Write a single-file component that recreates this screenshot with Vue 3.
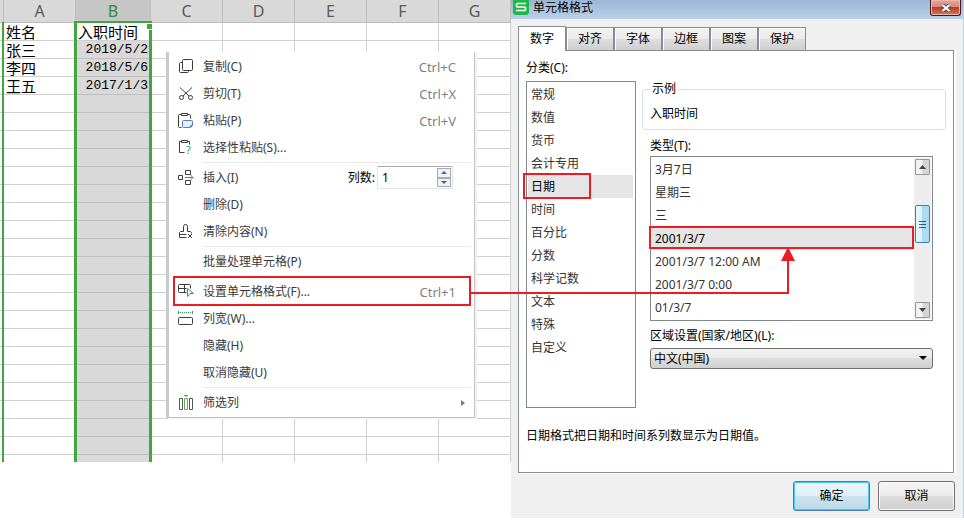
<script setup>
    import { ref, onMounted, onBeforeUnmount } from 'vue'

    const columns = ['A', 'B', 'C', 'D', 'E', 'F', 'G']
    const rows = [
        ['姓名', '入职时间'],
        ['张三', '2019/5/2'],
        ['李四', '2018/5/6'],
        ['王五', '2017/1/3']
    ]
    const rowCount = 25

    const menu = [
        { icon: 'copy', text: '复制(C)', key: 'Ctrl+C' },
        { icon: 'cut', text: '剪切(T)', key: 'Ctrl+X' },
        { icon: 'paste', text: '粘贴(P)', key: 'Ctrl+V' },
        { icon: 'special', text: '选择性粘贴(S)...' },
        { sep: true },
        { icon: 'insert', text: '插入(I)', count: true },
        { text: '删除(D)' },
        { icon: 'clear', text: '清除内容(N)' },
        { sep: true },
        { text: '批量处理单元格(P)' },
        { sep: true },
        { icon: 'format', text: '设置单元格格式(F)...', key: 'Ctrl+1', marked: true },
        { icon: 'width', text: '列宽(W)...' },
        { text: '隐藏(H)' },
        { text: '取消隐藏(U)' },
        { sep: true },
        { icon: 'filter', text: '筛选列', sub: true }
    ]

    const dark = '#3c3c3c'
    const green = '#2f9e5b'
    const blue = '#4a7fd6'

    const icons = {
        copy: [
            { d: 'M5.5 1.5h8a1 1 0 0 1 1 1v9a1 1 0 0 1-1 1h-8a1 1 0 0 1-1-1v-9a1 1 0 0 1 1-1z', c: dark },
            { d: 'M4.5 4.5h-2a1 1 0 0 0-1 1v8a1 1 0 0 0 1 1h7a1 1 0 0 0 1-1v-1', c: dark }
        ],
        cut: [
            { d: 'M2 2.5l9 8.5M14 2.5L5 11', c: dark },
            { d: 'M5.5 12.5a2 2 0 1 1-4 0a2 2 0 1 1 4 0zM14.5 12.5a2 2 0 1 1-4 0a2 2 0 1 1 4 0z', c: dark }
        ],
        paste: [
            { d: 'M3.5 2.5h-2a1 1 0 0 0-1 1v11a1 1 0 0 0 1 1h2M9.5 2.5h2a1 1 0 0 1 1 1v3', c: dark },
            { d: 'M3.5 1.5h6v2h-6z', c: dark },
            { d: 'M5.5 8.5h8a1 1 0 0 1 1 1v4l-2 2h-7a1 1 0 0 1-1-1v-5a1 1 0 0 1 1-1z', c: blue, f: '#e6effc' },
            { d: 'M14.5 13.5h-2v2', c: blue }
        ],
        special: [
            { d: 'M3.5 2.5h-2v11h5M9.5 2.5h2v3', c: dark },
            { d: 'M3.5 1.5h6v2h-6z', c: dark }
        ],
        insert: [
            { d: 'M.5 6.5h4v4h-4zM7.5 1.5h5v4h-5zM7.5 11.5h5v4h-5z', c: dark },
            { d: 'M7 8.5h8M12.5 6l2.5 2.5l-2.5 2.5', c: green }
        ],
        clear: [
            { d: 'M8.5 14.5h-7v-5l1-1h3v-5a2 2 0 0 1 4 0v5h3l1 1v1M1.5 11.5h7', c: dark },
            { d: 'M10 11l4 4M14 11l-4 4', c: dark }
        ],
        format: [
            { d: 'M8.5 9.5h-7a1 1 0 0 1-1-1v-6a1 1 0 0 1 1-1h10a1 1 0 0 1 1 1v3M.5 5.5h8M6.5 1.5v8', c: dark },
            { d: 'M9.5 5.5l6 5h-3.500l-2.500 3z', c: green, f: '#ffffff' }
        ],
        width: [
            { d: 'M1.5 7.5h12a1 1 0 0 1 1 1v5a1 1 0 0 1-1 1h-12a1 1 0 0 1-1-1v-5a1 1 0 0 1 1-1z', c: dark },
            { d: 'M.5 1v3M14.5 1v3M2 2.5h1M4 2.5h1M6 2.5h1M8 2.5h1M10 2.5h1M12 2.5h1', c: green }
        ],
        filter: [
            { d: 'M1.5 4.5h3v11h-3zM11.5 4.5h3v11h-3z', c: '#50555e' },
            { d: 'M6.5 4.5h3v11h-3zM6 1.5h4M7.5 2.5h1', c: '#5fae3c' }
        ]
    }

    const tabs = ['数字', '对齐', '字体', '边框', '图案', '保护']
    const categories = ['常规', '数值', '货币', '会计专用', '日期', '时间', '百分比', '分数', '科学记数', '文本', '特殊', '自定义']
    const types = ['3月7日', '星期三', '三', '2001/3/7', '2001/3/7 12:00 AM', '2001/3/7 0:00', '01/3/7']

    const tab = ref('数字')
    const category = ref('日期')
    const type = ref('2001/3/7')
    const count = ref(1)

    // connector between the marked menu entry and the chosen type
    const page = ref(null)
    const line = ref('')
    const head = ref('')

    function drawArrow() {
        const root = page.value
        const from = root.querySelector('.marked')
        const to = root.querySelector('.types .selected')
        if (!from || !to) {
            return
        }
        const base = root.getBoundingClientRect()
        const a = from.getBoundingClientRect()
        const b = to.getBoundingClientRect()
        const x1 = Math.round(a.right - base.left) - 4
        const y1 = Math.round(a.top - base.top) + 15
        const x2 = Math.round(b.left - base.left + b.width * 0.52)
        const y2 = Math.round(b.bottom - base.top) - 2
        line.value = `M${x1} ${y1}H${x2}V${y2 + 12}`
        head.value = `M${x2} ${y2 - 1}l7 14h-14z`
    }

    onMounted(() => {
        drawArrow()
        window.addEventListener('resize', drawArrow)
    })
    onBeforeUnmount(() => window.removeEventListener('resize', drawArrow))
</script>

<template>
	<main class="page" ref="page">
		<section class="sheet">
			<table class="grid">
				<colgroup>
					<col class="col-edge"><col class="col-a"><col class="col-b">
					<col v-for="n in 5" :key="n">
				</colgroup>
				<thead>
					<tr>
						<th></th>
						<th v-for="c in columns" :key="c" :class="{ current: c === 'B' }">{{ c }}</th>
					</tr>
				</thead>
				<tbody>
					<tr v-for="r in rowCount" :key="r">
						<td></td>
						<td v-for="(c, i) in columns" :key="c" :class="{ filled: i === 1 && r > 1, date: i === 1 && r > 1 }">{{ rows[r - 1] ? rows[r - 1][i] : '' }}</td>
					</tr>
				</tbody>
			</table>
			<div class="edge"></div>
			<div class="selection"><span class="handle"></span></div>

			<ul class="menu">
				<li v-for="(item, i) in menu" :key="i" :class="{ sep: item.sep, item: !item.sep, marked: item.marked }">
					<template v-if="!item.sep">
						<button type="button" class="entry">
							<svg class="icon" width="18" height="18" viewBox="0 0 18 18">
								<path v-for="(p, k) in icons[item.icon] || []" :key="k" :d="p.d" :stroke="p.c" :fill="p.f || 'none'" />
								<text v-if="item.icon === 'special'" x="8" y="15" class="mark">?</text>
							</svg>
							<span>{{ item.text }}</span>
							<span v-if="item.key" class="key">{{ item.key }}</span>
							<svg v-if="item.sub" class="more" width="4" height="6" viewBox="0 0 4 6"><path d="M0 0l4 3l-4 3z" fill="#777" /></svg>
						</button>
						<div v-if="item.count" class="count">
							<label for="count">列数:</label>
							<div class="spin">
								<input id="count" type="text" v-model="count">
								<div class="spin-buttons">
									<button type="button" aria-label="增加" @click="count++"><svg width="6" height="3" viewBox="0 0 6 3"><path d="M0 3l3-3l3 3z" fill="#4561a8" /></svg></button>
									<button type="button" aria-label="减少" @click="count--"><svg width="6" height="3" viewBox="0 0 6 3"><path d="M0 0l3 3l3-3z" fill="#4561a8" /></svg></button>
								</div>
							</div>
						</div>
					</template>
				</li>
			</ul>
		</section>

		<section class="dialog">
			<header class="title">
				<svg class="logo" width="16" height="15" viewBox="0 0 16 15">
					<path d="M0 0h16v12a3 3 0 0 1-3 3h-10a3 3 0 0 1-3-3z" fill="#1fb84a" />
					<path d="M13 3.500H4.500a1 1 0 0 0-1 1v1.500a1 1 0 0 0 1 1h7a1 1 0 0 1 1 1v1.500a1 1 0 0 1-1 1H3" fill="none" stroke="#fff" stroke-width="1.600" />
				</svg>
				<h1>单元格格式</h1>
				<button type="button" class="close" aria-label="关闭">
					<svg width="12" height="10" viewBox="0 0 12 10">
						<path d="M2.500 2l7 6M9.500 2l-7 6" stroke="#4a4a58" stroke-width="4" />
						<path d="M2.500 2l7 6M9.500 2l-7 6" stroke="#fff" stroke-width="2.200" />
					</svg>
				</button>
			</header>

			<nav class="tabs">
				<button v-for="t in tabs" :key="t" type="button" :class="{ active: t === tab }" @click="tab = t">{{ t }}</button>
			</nav>

			<div class="panel">
				<div class="columns">
					<div class="left">
						<span id="cat-label" class="label">分类(C):</span>
						<ul class="list categories" role="listbox" aria-labelledby="cat-label">
							<li v-for="c in categories" :key="c" role="option" :class="{ selected: c === category }" @click="category = c">{{ c }}</li>
						</ul>
					</div>
					<div class="right">
						<fieldset class="sample">
							<legend>示例</legend>
							<p>入职时间</p>
						</fieldset>
						<div class="fields">
							<span id="type-label" class="label">类型(T):</span>
							<div class="list type-box">
								<ul class="types" role="listbox" aria-labelledby="type-label">
									<li v-for="t in types" :key="t" role="option" :class="{ selected: t === type }" @click="type = t">{{ t }}</li>
								</ul>
								<div class="scroll">
									<button type="button" class="step" aria-label="向上"><svg width="7" height="4" viewBox="0 0 7 4"><path d="M0 4l3.500-4l3.500 4z" fill="#444" /></svg></button>
									<span class="thumb"><i></i><i></i><i></i></span>
									<button type="button" class="step" aria-label="向下"><svg width="7" height="4" viewBox="0 0 7 4"><path d="M0 0l3.500 4l3.500-4z" fill="#444" /></svg></button>
								</div>
							</div>
							<label for="region" class="label region-label">区域设置(国家/地区)(L):</label>
							<div class="drop">
								<select id="region"><option>中文(中国)</option></select>
								<svg width="8" height="4" viewBox="0 0 8 4"><path d="M0 0h8l-4 4z" fill="#000" /></svg>
							</div>
						</div>
					</div>
				</div>
				<p class="hint">日期格式把日期和时间系列数显示为日期值。</p>
			</div>

			<footer class="actions">
				<button type="button" class="primary">确定</button>
				<button type="button">取消</button>
			</footer>
		</section>

		<svg class="arrow">
			<path :d="line" fill="none" stroke="#ed1c24" stroke-width="2" />
			<path :d="head" fill="#ed1c24" />
		</svg>
	</main>
</template>

<style>
body {
	background: #fff;
}
</style>

<style scoped>
* {
	box-sizing: border-box;
}

.page {
	position: relative;
	display: grid;
	grid-template-columns: 511fr 453fr;
	align-items: start;
	font-family: "Noto Sans", "Noto Sans CJK SC", sans-serif;
	font-size: 12px;
	line-height: 16px;
	color: #000;
}

button,
input,
select {
	font: inherit;
	color: inherit;
	margin: 0;
	padding: 0;
}

ul,
p,
h1 {
	margin: 0;
	padding: 0;
	list-style: none;
}

/* sheet */
.sheet {
	position: relative;
	overflow: hidden;
}

.grid {
	width: 100%;
	table-layout: fixed;
	border-collapse: separate;
	border-spacing: 0;
	margin-bottom: -11px;
}

.col-edge {
	width: 4px;
}

.col-a {
	width: 72px;
}

.col-b {
	width: 75px;
}

.grid th {
	height: 23px;
	padding: 0;
	background: #d9d9d9;
	border-right: 1px solid #bdbdbd;
	border-bottom: 1px solid #bdbdbd;
	font-size: 16px;
	font-weight: 400;
	line-height: 22px;
	color: #595959;
}

.grid th.current {
	background: #c6c6c6;
	color: #2e8b35;
}

.grid td {
	height: 18px;
	padding: 0 2px;
	background: #fff;
	border-right: 1px solid #d0d0d0;
	border-bottom: 1px solid #d0d0d0;
	font-family: "Noto Sans CJK SC", sans-serif;
	font-size: 15px;
	line-height: 17px;
	white-space: nowrap;
}

.grid td:first-child {
	padding: 0;
}

.grid td.filled {
	background: #d9d9d9;
	border-bottom-color: #bfbfbf;
}

.grid td.date {
	font-family: "Liberation Mono", monospace;
	font-size: 13px;
	text-align: right;
}

.edge {
	position: absolute;
	top: 22px;
	bottom: 0;
	left: 2px;
	width: 2px;
	background: #40a640;
}

.selection {
	position: absolute;
	top: 21px;
	bottom: 0;
	left: 74px;
	width: 78px;
	border: 3px solid #40a640;
	border-top-width: 2px;
	border-bottom: 0;
}

.handle {
	position: absolute;
	top: 0;
	right: -4px;
	width: 7px;
	height: 7px;
	background: #40a640;
	border: 1px solid #fff;
}

/* context menu */
.menu {
	position: absolute;
	top: 52px;
	left: 166px;
	width: 309px;
	padding: 1px 0;
	background: #fff;
	border: 1px solid #c4c4c4;
	border-top: 0;
	border-left: 3px solid #cacaca;
	box-shadow: 2px 1px 0 #f2f2f2;
	color: #3a3a3a;
}

.item {
	position: relative;
	display: flex;
	align-items: center;
	height: 27px;
}

.sep {
	height: 1px;
	margin: 1px 3px 1px 34px;
	background: #e9e9e9;
}

.entry {
	flex: 1;
	display: flex;
	align-items: center;
	height: 27px;
	padding: 0 18px 0 9px;
	border: 0;
	background: none;
	text-align: left;
	white-space: nowrap;
}

.icon {
	flex: none;
	margin-right: 7px;
	overflow: visible;
}

.mark {
	fill: #2f9e5b;
	font-size: 11px;
}

.key {
	margin-left: auto;
	font-size: 13px;
	color: #808080;
}

.more {
	margin-left: auto;
	margin-right: -9px;
}

.marked::after {
	content: "";
	position: absolute;
	top: -2px;
	bottom: -1px;
	left: 4px;
	right: 3px;
	border: 2px solid #ed1c24;
}

.count {
	display: flex;
	align-items: center;
	gap: 2px;
	margin-right: 21px;
	color: #000;
}

.spin {
	display: flex;
	width: 76px;
	height: 23px;
	padding: 1px;
	border: 1px solid #dfe3ea;
	border-top-color: #abadb3;
}

.spin input {
	flex: 1;
	min-width: 0;
	padding-left: 3px;
	border: 0;
	outline: 0;
}

.spin-buttons {
	display: flex;
	flex-direction: column;
	width: 14px;
}

.spin-buttons button {
	flex: 1;
	display: flex;
	align-items: center;
	justify-content: center;
	border: 1px solid #a9abb0;
	background: #f1f1f3;
}

/* dialog */
.dialog {
	background: #f0f0f0;
	border-right: 1px solid #b9d1ea;
	padding-bottom: 7px;
}

.title {
	display: flex;
	align-items: flex-start;
	height: 19px;
	padding: 0 2px;
	background: linear-gradient(#9bb6d3, #b9d1ea);
}

.title h1 {
	flex: 1;
	margin-left: 4px;
	font-size: 12px;
	font-weight: 400;
	line-height: 16px;
}

.close {
	display: flex;
	align-items: center;
	justify-content: center;
	width: 31px;
	height: 16px;
	border: 1px solid #43181c;
	border-top: 0;
	border-radius: 0 0 3px 3px;
	background: linear-gradient(#e5a799 0%, #d98876 45%, #bb3d25 50%, #cf7a62 100%);
	box-shadow: inset 0 0 0 1px #e9b8ac;
}

.tabs {
	display: flex;
	align-items: flex-end;
	height: 31px;
	padding-left: 7px;
}

.tabs button {
	width: 48px;
	height: 23px;
	border: 1px solid #898c95;
	border-bottom: 0;
	background: linear-gradient(#f2f2f2 0%, #ebebeb 50%, #dddddd 51%, #cfcfcf 100%);
	box-shadow: inset 1px 1px 0 #fcfcfc;
}

.tabs .active {
	position: relative;
	height: 25px;
	margin-bottom: -1px;
	background: #fff;
}

.panel {
	margin: 0 9px 0 7px;
	padding: 9px 7px 28px;
	border: 1px solid #898c95;
	background: #fff;
	box-shadow: 2px 1px 0 #fff;
}

.columns {
	display: flex;
	gap: 6px;
}

.left {
	width: 110px;
}

.right {
	flex: 1;
}

.label {
	display: block;
	line-height: 16px;
}

.list {
	border: 1px solid #828790;
	background: #fff;
	color: #333;
}

.list li {
	position: relative;
	height: 23px;
	line-height: 23px;
}

.list .selected {
	background: #e5e5e5;
	color: #000;
}

.list .selected::after {
	content: "";
	position: absolute;
	border: 2px solid #ed1c24;
}

.categories {
	margin-top: 5px;
	padding: 1px 2px 48px 1px;
}

.categories li {
	padding-left: 3px;
}

.categories .selected::after {
	top: -2px;
	bottom: -1px;
	left: -5px;
	width: 64px;
}

.sample {
	margin: 21px 0 0;
	height: 49px;
	padding: 0 7px;
	border: 1px solid #d5dfe5;
	border-radius: 4px;
}

.sample legend {
	margin-left: 0;
	padding: 0 2px;
	line-height: 16px;
}

.sample p {
	margin-top: 9px;
}

.fields {
	padding: 8px 13px 0 8px;
}

.type-box {
	display: flex;
	height: 165px;
	margin-top: 2px;
	padding: 1px;
}

.types {
	flex: 1;
}

.types li {
	padding-left: 3px;
}

.types .selected::after {
	top: -1px;
	bottom: 1px;
	left: -3px;
	right: 0;
}

.scroll {
	display: flex;
	flex-direction: column;
	justify-content: space-between;
	width: 17px;
	padding: 1px;
	background: #ededed;
}

.step {
	display: flex;
	align-items: center;
	justify-content: center;
	width: 15px;
	height: 16px;
	border: 1px solid #979797;
	border-radius: 1px;
	background: linear-gradient(90deg, #f3f3f3 45%, #d4d4d4 55%);
}

.thumb {
	display: flex;
	flex-direction: column;
	align-items: center;
	justify-content: center;
	gap: 2px;
	height: 38px;
	margin-bottom: 29px;
	border: 1px solid #3c7fb1;
	border-radius: 2px;
	background: linear-gradient(90deg, #e3f4fc 40%, #a9dbf5 50%);
}

.thumb i {
	width: 7px;
	height: 1px;
	background: #2a5f85;
}

.region-label {
	margin-top: 7px;
}

.drop {
	position: relative;
	margin-top: 4px;
}

.drop select {
	display: block;
	width: 100%;
	height: 21px;
	padding: 0 3px;
	appearance: none;
	border: 1px solid #707070;
	border-radius: 3px;
	background: linear-gradient(#f2f2f2 0%, #ebebeb 49%, #dddddd 50%, #cfcfcf 100%);
}

.drop svg {
	position: absolute;
	top: 8px;
	right: 6px;
}

.hint {
	margin-top: 20px;
}

.actions {
	display: flex;
	justify-content: flex-end;
	gap: 8px;
	margin-top: 8px;
	padding-right: 8px;
}

.actions button {
	width: 77px;
	height: 30px;
	border: 1px solid #707070;
	border-radius: 3px;
	background: linear-gradient(#f4f4f4 0%, #ececec 48%, #dddddd 50%, #cfcfcf 100%);
	box-shadow: inset 0 0 0 1px #fafafa;
}

.actions .primary {
	border-color: #3c7fb1;
	background: linear-gradient(#eef7fb 0%, #e1f0f7 48%, #cde3ef 50%, #bcd9e9 100%);
	box-shadow: inset 0 0 0 1px #46cdf5;
}

.arrow {
	position: absolute;
	top: 0;
	left: 0;
	width: 100%;
	height: 100%;
	pointer-events: none;
}
</style>
